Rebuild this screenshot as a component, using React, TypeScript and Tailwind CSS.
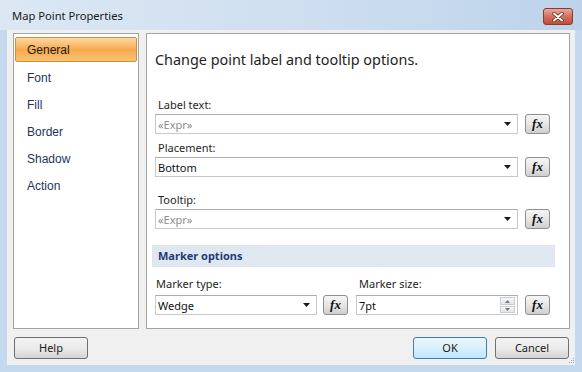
import React from "react";

const UI = { fontFamily: '"Noto Sans", "Open Sans", sans-serif' };
const ARIAL = { fontFamily: '"Liberation Sans", Arial, sans-serif' };

function Arrow() {
  return (
    <svg width="7" height="4" viewBox="0 0 7 4" className="shrink-0">
      <path d="M0 0 H7 L3.5 4 Z" fill="#1a1a1a" />
    </svg>
  );
}

function Fx() {
  return (
    <div className="w-[25px] h-[20px] shrink-0 rounded-[3px] border border-[#8e8f8f] bg-gradient-to-b from-[#f6f6f6] via-[#e6e6e6] to-[#cfcfcf] flex items-center justify-center">
      <span
        className="text-[13px] font-bold italic leading-none text-[#111] -mt-[1px]"
        style={{ fontFamily: '"Liberation Serif", serif' }}
      >
        fx
      </span>
    </div>
  );
}

function Combo({ text, placeholder, w }: { text: string; placeholder?: boolean; w: string }) {
  return (
    <div
      className={`${w} h-[20px] shrink-0 border border-[#c6c9ce] border-t-[#a9acb1] bg-white flex items-center pl-[2px] pr-[6px]`}
    >
      <span
        className={`flex-1 text-[11px] leading-none ${placeholder ? "text-[#8c8c8c]" : "text-[#111]"}`}
      >
        {text}
      </span>
      <Arrow />
    </div>
  );
}

function Label({ children, className = "" }: { children: React.ReactNode; className?: string }) {
  return <div className={`h-[16px] flex items-center text-[11px] text-[#1e1e1e] ${className}`}>{children}</div>;
}

function Btn({ children, primary }: { children: React.ReactNode; primary?: boolean }) {
  return (
    <div
      className={`w-[74px] h-[22px] rounded-[3px] border flex items-center justify-center text-[11px] text-[#1a1a1a] ${
        primary
          ? "border-[#3c7fb1] bg-gradient-to-b from-[#eaf6fd] via-[#d9f0fc] to-[#bee6fd]"
          : "border-[#707070] bg-gradient-to-b from-[#f2f2f2] via-[#ebebeb] to-[#d5d5d5]"
      }`}
    >
      {children}
    </div>
  );
}

export default function App() {
  const items = ["Font", "Fill", "Border", "Shadow", "Action"];
  return (
    <div className="w-[582px] h-[372px] bg-[#c4d8ee] flex flex-col overflow-hidden" style={UI}>
      {/* title bar */}
      <div className="h-[30px] shrink-0 flex items-center justify-between pl-[12px] pr-[9px] bg-gradient-to-r from-[#dce7f3] via-[#cfdff0] to-[#bdd3eb]">
        <span className="text-[11.2px] text-[#1a1a1a] mt-[2px]">Map Point Properties</span>
        <div className="w-[30px] h-[17px] mt-[3px] rounded-[3px] border border-[#8c3a30] bg-gradient-to-b from-[#e9a899] via-[#d4705f] to-[#c14a38] flex items-center justify-center">
          <svg width="12" height="10" viewBox="0 0 12 10">
            <path d="M2 1.5 L10 8.5 M10 1.5 L2 8.5" stroke="#5a2219" strokeWidth="3.4" strokeLinecap="round" />
            <path d="M2 1.5 L10 8.5 M10 1.5 L2 8.5" stroke="#ffffff" strokeWidth="2" strokeLinecap="round" />
          </svg>
        </div>
      </div>

      {/* client */}
      <div className="mx-[7px] h-[335px] shrink-0 bg-[#f0f0f0] flex flex-col pt-[3px] pl-[6px] pr-[5px] relative">
        <div className="flex gap-[7px] h-[296px]">
          {/* left list */}
          <div className="w-[126px] h-full border border-[#a3a3a3] bg-white pt-[3px] px-[1px]" style={ARIAL}>
            <div className="h-[25px] mb-[2px] rounded-[2px] border border-[#c8903f] bg-gradient-to-b from-[#fcd9a2] via-[#f7a94c] to-[#f8c271] flex items-center pl-[11px] text-[12px] text-[#1a1a1a]">
              General
            </div>
            {items.map((t) => (
              <div key={t} className="h-[27px] flex items-center pl-[12px] text-[12px] text-[#1c355e]">
                {t}
              </div>
            ))}
          </div>

          {/* right panel */}
          <div className="flex-1 h-full border border-[#a3a3a3] bg-white pl-[8px] flex flex-col">
            <div className="h-[20px] mt-[16px] flex items-center text-[14.4px] text-[#1e1e1e]">
              Change point label and tooltip options.
            </div>

            <Label className="mt-[27px] pl-[3px]">Label text:</Label>
            <div className="flex items-center gap-[7px] mt-[1px]">
              <Combo text="«Expr»" placeholder w="w-[363px]" />
              <Fx />
            </div>

            <Label className="mt-[6px] pl-[3px]">Placement:</Label>
            <div className="flex items-center gap-[7px] mt-[1px]">
              <Combo text="Bottom" w="w-[363px]" />
              <Fx />
            </div>

            <Label className="mt-[15px] pl-[3px]">Tooltip:</Label>
            <div className="flex items-center gap-[7px] mt-[1px]">
              <Combo text="«Expr»" placeholder w="w-[363px]" />
              <Fx />
            </div>

            <div className="mt-[16px] ml-[-3px] w-[403px] h-[22px] bg-[#dfe8f1] flex items-center pl-[6px] text-[11px] font-bold text-[#1f3a78]">
              Marker options
            </div>

            <div className="flex mt-[9px]">
              <div className="flex flex-col">
                <Label className="pl-[1px]">Marker type:</Label>
                <div className="flex items-center gap-[6px] mt-[3px]">
                  <Combo text="Wedge" w="w-[162px]" />
                  <Fx />
                </div>
              </div>
              <div className="flex flex-col ml-[8px]">
                <Label className="pl-[3px]">Marker size:</Label>
                <div className="flex items-center gap-[7px] mt-[3px]">
                  <div className="w-[162px] h-[20px] border border-[#c6c9ce] border-t-[#a9acb1] bg-white flex items-center pl-[2px] pr-[2px]">
                    <span className="flex-1 text-[11px] leading-none text-[#111]">7pt</span>
                    <div className="w-[15px] h-[16px] flex flex-col gap-[1px]">
                      <div className="h-[8px] border border-[#c9cdd2] bg-gradient-to-b from-[#f7f7f7] to-[#e3e5e8] flex items-center justify-center">
                        <svg width="5" height="3" viewBox="0 0 5 3"><path d="M0 3 L2.5 0 L5 3 Z" fill="#6d7884" /></svg>
                      </div>
                      <div className="h-[7px] border border-[#c9cdd2] bg-gradient-to-b from-[#f7f7f7] to-[#e3e5e8] flex items-center justify-center">
                        <svg width="5" height="3" viewBox="0 0 5 3"><path d="M0 0 L5 0 L2.5 3 Z" fill="#6d7884" /></svg>
                      </div>
                    </div>
                  </div>
                  <Fx />
                </div>
              </div>
            </div>
          </div>
        </div>

        {/* buttons */}
        <div className="flex items-center mt-[8px] pl-[1px] pr-[1px]">
          <Btn>Help</Btn>
          <div className="flex-1" />
          <div className="flex gap-[8px]">
            <Btn primary>OK</Btn>
            <Btn>Cancel</Btn>
          </div>
        </div>

        {/* resize grip */}
        <div className="absolute right-[1px] bottom-[2px] grid grid-cols-3 gap-[1px]">
          {[0, 0, 1, 0, 1, 1, 1, 1, 1].map((v, i) => (
            <div key={i} className={`w-[1px] h-[1px] ${v ? "bg-[#9aa3ad]" : ""}`} />
          ))}
        </div>
      </div>
    </div>
  );
}
